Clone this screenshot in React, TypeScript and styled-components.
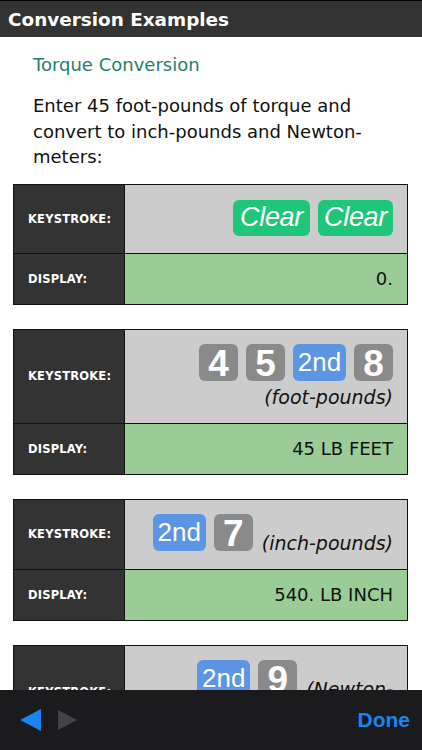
import styled, { createGlobalStyle } from 'styled-components';

const GlobalStyle = createGlobalStyle`
  html, body {
    margin: 0;
    padding: 0;
    background: #fff;
  }
  body {
    font-family: "DejaVu Sans", Verdana, sans-serif;
  }
`

const Screen = styled.div`
  width: 422px;
  height: 750px;
  display: flex;
  flex-direction: column;
  overflow: hidden;
  background: #fff;
`

const TopBar = styled.div`
  height: 36px;
  flex: none;
  border-top: 1px solid #000;
  background: #333333;
  display: flex;
  align-items: center;
  padding-left: 8px;
  color: #fff;
  font-size: 18.4px;
  font-weight: bold;
`

const Content = styled.div`
  flex: 1;
  overflow: hidden;
  padding: 15px 14px 0 13px;
`

const SectionTitle = styled.div`
  color: #1f8070;
  font-size: 18px;
  line-height: 25px;
  padding-left: 20px;
`

const Intro = styled.p`
  margin: 16px 0 14px;
  padding-left: 20px;
  font-size: 18px;
  line-height: 25.5px;
  color: #111;
`

const Table = styled.div`
  border: 1px solid #111;
  display: grid;
  grid-template-columns: 111px 1fr;
  margin-bottom: 24px;
`

const Label = styled.div`
  background: #333333;
  color: #fff;
  font-size: 11.5px;
  font-weight: bold;
  letter-spacing: 0.2px;
  display: flex;
  align-items: center;
  padding-left: 14px;
  border-right: 1px solid #111;
  border-bottom: 1px solid #111;
  &:nth-last-child(2) {
    border-bottom: none;
  }
`

const Keys = styled.div<{ $h: number }>`
  background: #cccccc;
  min-height: ${p => p.$h}px;
  box-sizing: border-box;
  border-bottom: 1px solid #111;
  padding: 14px 14px 10px;
  text-align: right;
  font-size: 19px;
  font-style: italic;
  color: #111;
  line-height: 32px;
`

const KeyLine = styled.div`
  display: flex;
  justify-content: flex-end;
  align-items: flex-end;
  gap: 8px;
`

const Note = styled.span`
  display: inline-block;
  margin-left: 1px;
  margin-bottom: -8px;
`

const Key = styled.span<{ $kind: 'num' | 'second' | 'clear' }>`
  display: inline-flex;
  align-items: center;
  justify-content: center;
  height: 37px;
  border-radius: 6px;
  font-family: "Liberation Sans", Arial, sans-serif;
  font-style: ${p => p.$kind === 'clear' ? 'italic' : 'normal'};
  color: #fff;
  line-height: 1;
  box-sizing: border-box;
  ${p => p.$kind === 'num' && `
    background: #8a8a8a;
    width: 39px;
    font-size: 37px;
    font-weight: bold;
    padding-top: 2px;
  `}
  ${p => p.$kind === 'second' && `
    background: #5c95e4;
    width: 53px;
    font-size: 26px;
  `}
  ${p => p.$kind === 'clear' && `
    background: #1fc67a;
    width: 77px;
    height: 36px;
    font-size: 27px;
    letter-spacing: -0.3px;
  `}
`

const Display = styled.div`
  background: #9bcc97;
  height: 50px;
  display: flex;
  align-items: center;
  justify-content: flex-end;
  padding-right: 14px;
  font-size: 18px;
  color: #111;
`

const BottomBar = styled.div`
  height: 60px;
  flex: none;
  background: #1b1b1d;
  display: flex;
  align-items: center;
  padding: 0 12px 0 20px;
`

const Arrows = styled.div`
  display: flex;
  align-items: center;
  gap: 15px;
  flex: 1;
`

const DoneButton = styled.span`
  color: #1a84f2;
  font-family: "Liberation Sans", Arial, sans-serif;
  font-weight: bold;
  font-size: 21px;
`

const Triangle = ({ dir, color }: { dir: 'left' | 'right'; color: string }) => (
  <svg width="22" height="22" viewBox="0 0 22 22">
    {dir === 'left'
      ? <path d="M21 0 L21 22 L0 11 Z" fill={color} />
      : <path d="M1 1 L1 21 L20 11 Z" fill={color} />}
  </svg>
)

const App = () => {
  return (
    <Screen>
      <GlobalStyle />
      <TopBar>Conversion Examples</TopBar>
      <Content>
        <SectionTitle>Torque Conversion</SectionTitle>
        <Intro>Enter 45 foot-pounds of torque and convert to inch-pounds and Newton-meters:</Intro>

        <Table>
          <Label>KEYSTROKE:</Label>
          <Keys $h={69} style={{ paddingTop: 15 }}>
            <KeyLine>
              <Key $kind="clear">Clear</Key>
              <Key $kind="clear" style={{ width: 75 }}>Clear</Key>
            </KeyLine>
          </Keys>
          <Label>DISPLAY:</Label>
          <Display>0.</Display>
        </Table>

        <Table>
          <Label>KEYSTROKE:</Label>
          <Keys $h={93}>
            <KeyLine>
              <Key $kind="num">4</Key>
              <Key $kind="num">5</Key>
              <Key $kind="second">2nd</Key>
              <Key $kind="num">8</Key>
            </KeyLine>
            <div>(foot-pounds)</div>
          </Keys>
          <Label>DISPLAY:</Label>
          <Display>45 LB FEET</Display>
        </Table>

        <Table>
          <Label>KEYSTROKE:</Label>
          <Keys $h={70}>
            <KeyLine>
              <Key $kind="second">2nd</Key>
              <Key $kind="num">7</Key>
              <Note>(inch-pounds)</Note>
            </KeyLine>
          </Keys>
          <Label>DISPLAY:</Label>
          <Display>540. LB INCH</Display>
        </Table>

        <Table>
          <Label>KEYSTROKE:</Label>
          <Keys $h={93}>
            <KeyLine>
              <Key $kind="second">2nd</Key>
              <Key $kind="num">9</Key>
              <Note>(Newton-</Note>
            </KeyLine>
            <div>meters)</div>
          </Keys>
          <Label>DISPLAY:</Label>
          <Display>61.0 N M</Display>
        </Table>
      </Content>
      <BottomBar>
        <Arrows>
          <Triangle dir="left" color="#1a84f2" />
          <Triangle dir="right" color="#444446" />
        </Arrows>
        <DoneButton>Done</DoneButton>
      </BottomBar>
    </Screen>
  )
}

export default App;
